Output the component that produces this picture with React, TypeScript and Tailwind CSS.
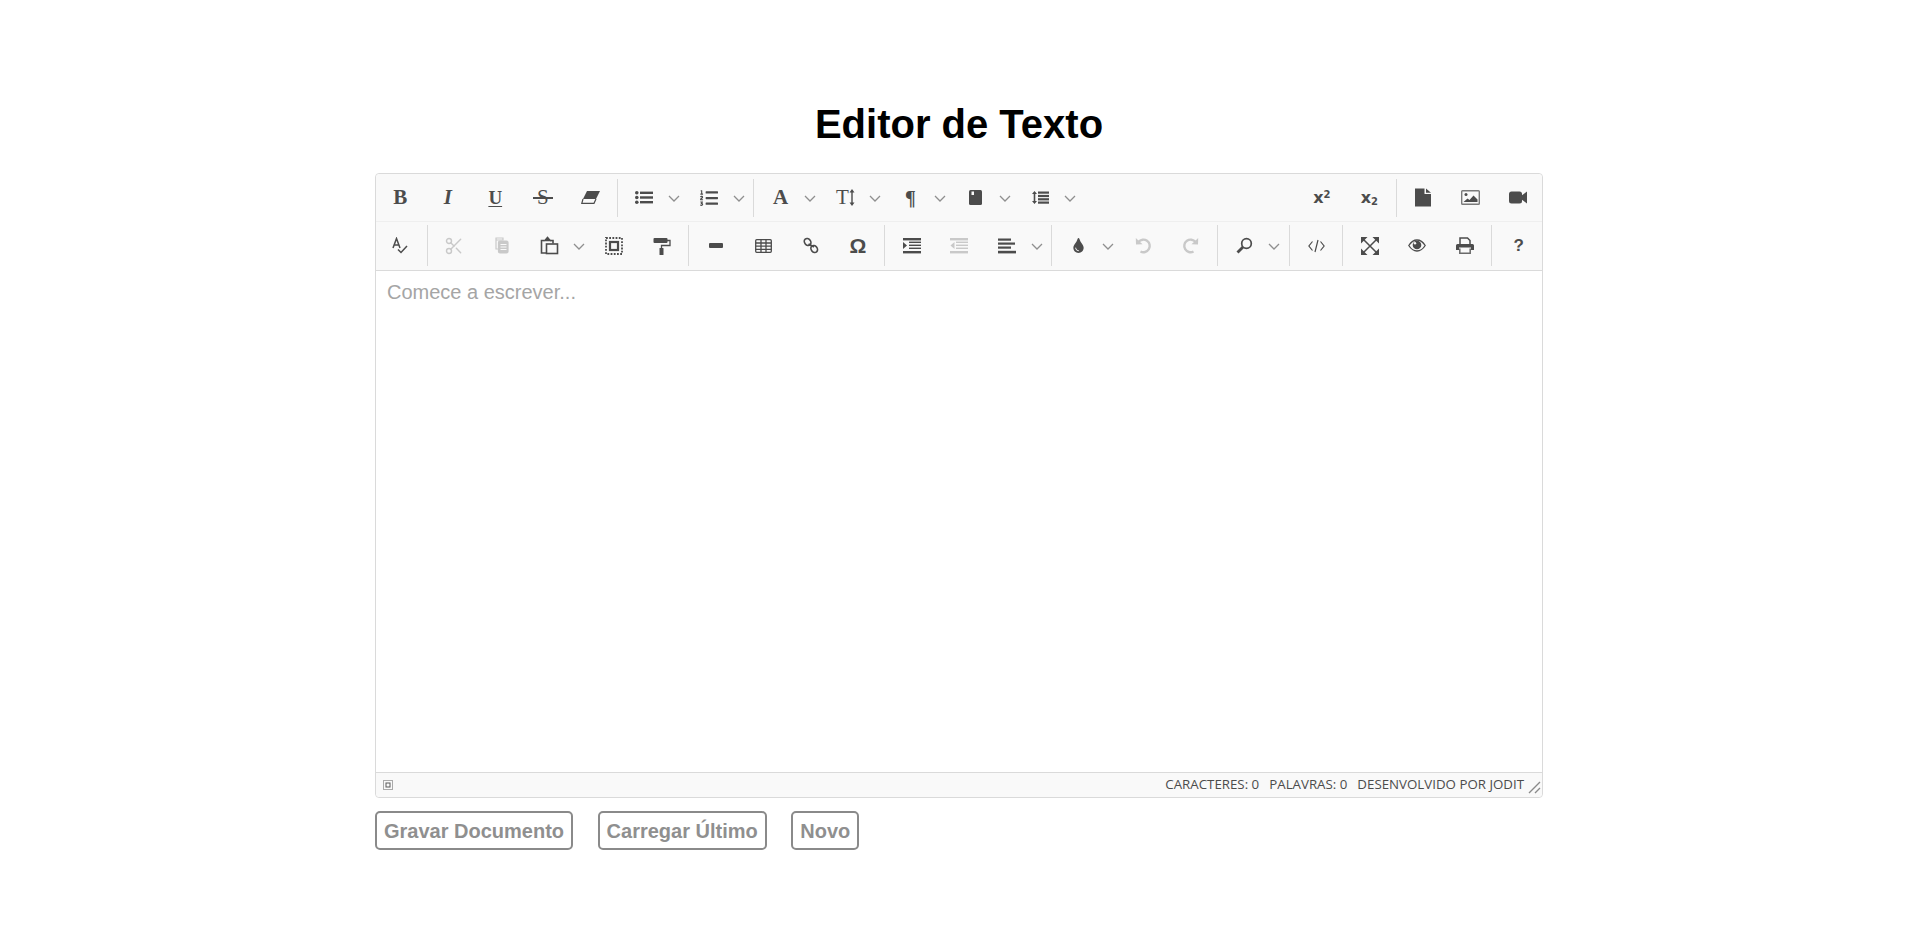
import type { ReactNode } from "react";
import { Scissors } from "lucide-react";
import { FaListOl, FaTint } from "react-icons/fa";

const dark = "#4c4c4c";
const off = "#c9c9c9";

function Btn({ children }: { children: ReactNode }) {
  return <div className="w-[47.5px] h-full flex items-center justify-center shrink-0 text-[#4c4c4c]">{children}</div>;
}

function Chev() {
  return (
    <div className="w-[17.5px] h-full shrink-0 flex items-center">
      <svg width="12" height="7" viewBox="0 0 12 7" fill="none" stroke="#8f8f8f" strokeWidth="1.3" className="mt-[2px]">
        <path d="M1 1l5 5 5-5" />
      </svg>
    </div>
  );
}

function Sep() {
  return <div className="w-px my-[3.5px] mx-[2.7px] bg-[#dadada] shrink-0" />;
}

function Glyph({ children, className }: { children: ReactNode; className: string }) {
  return <span className={`leading-none ${className}`}>{children}</span>;
}

function Eraser() {
  return (
    <svg width="19" height="13" viewBox="0 0 19 13">
      <path d="M2 8L.8 12.300H13L15 8" fill="none" stroke={dark} strokeWidth="1.200" />
      <path d="M6 0h13l-4 8H2z" fill={dark} />
    </svg>
  );
}

function ListUl() {
  return (
    <svg width="18" height="13" viewBox="0 0 18 13" fill={dark}>
      <circle cx="1.800" cy="1.800" r="1.800" />
      <circle cx="1.800" cy="6.500" r="1.800" />
      <circle cx="1.800" cy="11.200" r="1.800" />
      <rect x="5" y="0.600" width="13" height="2.400" />
      <rect x="5" y="5.300" width="13" height="2.400" />
      <rect x="5" y="10" width="13" height="2.400" />
    </svg>
  );
}

function Book() {
  return (
    <svg width="13" height="15" viewBox="0 0 13 15">
      <rect width="13" height="15" rx="1.500" fill={dark} />
      <rect x="2.500" y="1.500" width="2.500" height="3.500" fill="#f9f9f9" />
    </svg>
  );
}

function Spell() {
  return (
    <svg width="16" height="17" viewBox="0 0 16 17" fill="none" stroke={dark} strokeWidth="1.500">
      <path d="M1 11L4.500 1.500 8 11M2.200 8h4.600" />
      <path d="M6 12.500l3 3 6-6.500" />
    </svg>
  );
}

function Copy() {
  return (
    <svg width="14" height="17" viewBox="0 0 14 17" fill="none" stroke={off} strokeWidth="1.200">
      <path d="M1 1h7v2H1zM1 3v9h2" />
      <rect x="3.500" y="4" width="9.500" height="12" rx="1.500" fill={off} />
      <path d="M5.500 7.500h6M5.500 10h6M5.500 12.500h6" stroke="#f9f9f9" strokeWidth="1" />
    </svg>
  );
}

function Paste() {
  return (
    <svg width="19" height="19" viewBox="0 0 19 19" fill="none" stroke={dark} strokeWidth="1.600">
      <path d="M6 17H1.500V4.500h3M10 4.500h3v3" />
      <path d="M5 4.500L7.500 1.500 10 4.500z" fill={dark} />
      <rect x="6.500" y="8" width="11" height="9.500" />
    </svg>
  );
}

function SelectAll() {
  return (
    <svg width="18" height="18" viewBox="0 0 18 18" fill="none" stroke={dark}>
      <rect x="1" y="1" width="16" height="16" strokeWidth="1.800" strokeDasharray="1.800 1.400" />
      <rect x="5" y="5" width="8" height="8" strokeWidth="2.200" />
    </svg>
  );
}

function Roller() {
  return (
    <svg width="18" height="18" viewBox="0 0 18 18">
      <rect x="0.500" y="1" width="14" height="5" rx="1" fill={dark} />
      <path d="M14 3.500h3v5H8.500V12" fill="none" stroke={dark} strokeWidth="1.300" />
      <rect x="6.500" y="11" width="4" height="7" rx="0.600" fill={dark} />
    </svg>
  );
}

function Hr() {
  return <div className="w-[14px] h-[5px] rounded-[1px] bg-[#4c4c4c]" />;
}

function TableIcon() {
  return (
    <svg width="17" height="14" viewBox="0 0 17 14" fill="none" stroke={dark} strokeWidth="1.300">
      <rect x="0.700" y="0.700" width="15.600" height="12.600" rx="1" />
      <path d="M.7 4h15.600M.7 7.200h15.600M.7 10.300h15.600M6 .7v12.600M11 .7v12.600" />
    </svg>
  );
}

function LinkIcon() {
  return (
    <svg width="16" height="17" viewBox="0 0 16 17" fill="none" stroke={dark} strokeWidth="1.700">
      <ellipse cx="4.600" cy="5" rx="3" ry="3.700" transform="rotate(-40 4.600 5)" />
      <ellipse cx="11.200" cy="12" rx="3" ry="3.700" transform="rotate(-40 11.200 12)" />
      <path d="M5.500 7l5.500 3" />
    </svg>
  );
}

function Lines({ color, indent }: { color: string; indent: "in" | "out" }) {
  return (
    <svg width="18" height="16" viewBox="0 0 18 16" fill={color}>
      <rect y="0" width="18" height="2.400" />
      <rect x="6" y="3.600" width="12" height="1.400" />
      <rect x="6" y="6.600" width="12" height="1.400" />
      <rect x="6" y="9.600" width="12" height="1.400" />
      <rect y="13" width="18" height="2.400" />
      {indent === "in" ? <path d="M0 4l4 3.500-4 3.500z" /> : <path d="M4.500 4L.5 7.500l4 3.500z" />}
    </svg>
  );
}

function AlignIcon() {
  return (
    <svg width="18" height="16" viewBox="0 0 18 16" fill={dark}>
      <rect y="0.500" width="13" height="2.200" />
      <rect y="4.500" width="17" height="2.200" />
      <rect y="8.500" width="13" height="2.200" />
      <rect y="12.800" width="18" height="2.600" />
    </svg>
  );
}

function LineHeight() {
  return (
    <svg width="17" height="13" viewBox="0 0 17 13" fill={dark}>
      <path d="M2.500 0L5 3H3.300v7H5l-2.500 3L0 10h1.700V3H0z" />
      <rect x="6" y="0.500" width="11" height="2.200" />
      <rect x="6" y="3.900" width="11" height="2.200" />
      <rect x="6" y="7.200" width="11" height="2.200" />
      <rect x="6" y="10.500" width="11" height="2.200" />
    </svg>
  );
}

function Arc({ flip }: { flip?: boolean }) {
  return (
    <svg width="17" height="17" viewBox="0 0 17 17" fill="none" className={flip ? "-scale-x-100" : ""}>
      <path d="M3.500 5A6.300 6.300 0 1 1 5.500 14.500" stroke={off} strokeWidth="2.400" />
      <path d="M.8 1l.2 6.500 6.500-.2z" fill={off} />
    </svg>
  );
}

function Search() {
  return (
    <svg width="17" height="17" viewBox="0 0 17 17" fill="none" stroke={dark}>
      <circle cx="10.500" cy="6.500" r="4.800" strokeWidth="1.700" />
      <path d="M7 10L1.500 15.500" strokeWidth="2.800" />
    </svg>
  );
}

function CodeIcon() {
  return (
    <svg width="17" height="14" viewBox="0 0 17 14" fill="none" stroke={dark} strokeWidth="1.200">
      <path d="M4.500 2.500L.9 7l3.600 4.500M12.500 2.500L16.100 7l-3.600 4.500M10 1L7 13" />
    </svg>
  );
}

function Fullscreen() {
  return (
    <svg width="18" height="18" viewBox="0 0 18 18" fill={dark}>
      <path d="M0 0h6.500L0 6.500zM18 0v6.500L11.500 0zM0 18v-6.500L6.500 18zM18 18h-6.500l6.500-6.500z" />
      <path d="M2.500 2.500l13 13M15.500 2.500l-13 13" stroke={dark} strokeWidth="1.500" fill="none" />
    </svg>
  );
}

function Eye() {
  return (
    <svg width="18" height="13" viewBox="0 0 18 13">
      <path d="M.8 6.500C3 3 5.800 1 9 1s6 2 8.200 5.500C15 10 12.200 12 9 12S3 10 .8 6.500z" fill="none" stroke={dark} strokeWidth="1.300" />
      <circle cx="9" cy="6" r="4.300" fill={dark} />
      <circle cx="7" cy="4.300" r="1.200" fill="#f9f9f9" />
    </svg>
  );
}

function Printer() {
  return (
    <svg width="18" height="17" viewBox="0 0 18 17">
      <path d="M4 7V1h7.500L14 3.500V7" fill="none" stroke={dark} strokeWidth="1.500" />
      <path d="M1.500 7h15A1.500 1.500 0 0 1 18 8.500V13h-3v-2.500H3V13H0V8.500A1.500 1.500 0 0 1 1.500 7z" fill={dark} />
      <path d="M3.800 11.500v4.700h10.400v-4.700" fill="none" stroke="#6a6a6a" strokeWidth="1.500" />
    </svg>
  );
}

function FileIcon() {
  return (
    <svg width="16" height="19" viewBox="0 0 16 19" fill={dark}>
      <path d="M0 .5h9.500v5.500H16v12.500H0zM11 .5L16 4.700h-5z" />
    </svg>
  );
}

function ImageIcon() {
  return (
    <svg width="19" height="15" viewBox="0 0 19 15">
      <rect x="0.700" y="0.700" width="17.600" height="13.600" rx="0.800" fill="none" stroke="#7a7a7a" strokeWidth="1.400" />
      <circle cx="5" cy="4.500" r="1.500" fill={dark} />
      <path d="M2.500 12l4-3.500 2 1.500 4-4.500 4 4v2.500z" fill={dark} />
    </svg>
  );
}

function VideoIcon() {
  return (
    <svg width="18" height="13" viewBox="0 0 18 13" fill={dark}>
      <rect x="0" y="0.500" width="13" height="12" rx="2.500" />
      <path d="M12 5l6-4.500v12L12 8z" />
    </svg>
  );
}

function Toolbar() {
  return (
    <div className="bg-[#f9f9f9] border-b border-[#dadada] rounded-t-[4px]">
      <div className="flex h-[47.5px] pl-[0.5px] pt-[1px] border-b border-[#efefef]">
        <Btn><Glyph className="font-['Liberation_Serif'] font-bold text-[21px]">B</Glyph></Btn>
        <Btn><Glyph className="font-['Liberation_Serif'] font-bold italic text-[21px]">I</Glyph></Btn>
        <Btn><Glyph className="font-['Liberation_Serif'] font-bold underline underline-offset-2 text-[19px]">U</Glyph></Btn>
        <Btn>
          <span className="relative font-['Liberation_Serif'] text-[21px] leading-none">
            S
            <span className="absolute left-[-4px] right-[-4px] top-[10px] h-[1.500px] bg-[#4c4c4c]" />
          </span>
        </Btn>
        <Btn><Eraser /></Btn>
        <Sep />
        <Btn><ListUl /></Btn><Chev />
        <Btn><FaListOl size={18} /></Btn><Chev />
        <Sep />
        <Btn><Glyph className="font-['Liberation_Serif'] font-bold text-[21px]">A</Glyph></Btn><Chev />
        <Btn>
          <div className="flex items-center">
            <Glyph className="font-['Liberation_Serif'] text-[21px]">T</Glyph>
            <svg width="6" height="17" viewBox="0 0 6 17" fill={dark}>
              <path d="M3 0l2.500 3.500H3.700v10h1.800L3 17 .5 13.500h1.800v-10H.5z" />
            </svg>
          </div>
        </Btn><Chev />
        <Btn><Glyph className="font-['Liberation_Serif'] font-bold text-[20px]">¶</Glyph></Btn><Chev />
        <Btn><Book /></Btn><Chev />
        <Btn><LineHeight /></Btn><Chev />
        <div className="ml-auto flex h-full">
          <Btn><span className="font-['DejaVu_Sans'] font-bold text-[16px] leading-none">x<sup className="text-[10px] font-bold">2</sup></span></Btn>
          <Btn><span className="font-['DejaVu_Sans'] font-bold text-[16px] leading-none">x<sub className="text-[10px] font-bold">2</sub></span></Btn>
          <Sep />
          <Btn><FileIcon /></Btn>
          <Btn><ImageIcon /></Btn>
          <Btn><VideoIcon /></Btn>
        </div>
      </div>
      <div className="flex h-[48px] pl-[0.5px]">
        <Btn><Spell /></Btn>
        <Sep />
        <Btn><Scissors size={20} color={off} strokeWidth={1.700} /></Btn>
        <Btn><Copy /></Btn>
        <Btn><Paste /></Btn><Chev />
        <Btn><SelectAll /></Btn>
        <Btn><Roller /></Btn>
        <Sep />
        <Btn><Hr /></Btn>
        <Btn><TableIcon /></Btn>
        <Btn><LinkIcon /></Btn>
        <Btn><Glyph className="font-['Liberation_Sans'] font-bold text-[21px]">Ω</Glyph></Btn>
        <Sep />
        <Btn><Lines color={dark} indent="in" /></Btn>
        <Btn><Lines color={off} indent="out" /></Btn>
        <Btn><AlignIcon /></Btn><Chev />
        <Sep />
        <Btn><FaTint size={15} /></Btn><Chev />
        <Btn><Arc /></Btn>
        <Btn><Arc flip /></Btn>
        <Sep />
        <Btn><Search /></Btn><Chev />
        <Sep />
        <Btn><CodeIcon /></Btn>
        <Sep />
        <Btn><Fullscreen /></Btn>
        <Btn><Eye /></Btn>
        <Btn><Printer /></Btn>
        <Sep />
        <Btn><Glyph className="font-['Liberation_Sans'] font-bold text-[17px]">?</Glyph></Btn>
      </div>
    </div>
  );
}

function StatusBar() {
  return (
    <div className="flex items-center h-[25px] bg-[#f9f9f9] border-t border-[#dadada] rounded-b-[4px] pl-[7px] pr-[1px] text-[#4c4c4c]">
      <svg width="10" height="10" viewBox="0 0 10 10" fill="none" stroke="#5a5a5a">
        <rect x="0.500" y="0.500" width="9" height="9" strokeWidth="1" strokeDasharray="1 1" />
        <rect x="3" y="3" width="4" height="4" strokeWidth="1" />
      </svg>
      <div className="ml-auto flex items-center font-['Open_Sans'] text-[13.3px] leading-none gap-[10px] mr-[4px] pt-[1px]">
        <span>CARACTERES: 0</span>
        <span>PALAVRAS: 0</span>
        <span>DESENVOLVIDO POR JODIT</span>
      </div>
      <svg width="13" height="13" viewBox="0 0 13 13" fill="none" stroke="#8a8a8a" strokeWidth="1.400" className="mt-[5px]">
        <path d="M1 12L12 1M7 12l5-5" />
      </svg>
    </div>
  );
}

function FormBtn({ children }: { children: ReactNode }) {
  return (
    <button className="h-[39px] px-[7px] border-2 border-[#8a8a8a] rounded-[5px] bg-white font-['Liberation_Sans'] font-bold text-[20px] text-[#8f8f8f]">
      {children}
    </button>
  );
}

export default function App() {
  return (
    <div className="min-h-[927px] bg-white pt-[101px] font-['Liberation_Sans',sans-serif]">
      <div className="w-[1168px] mx-auto">
        <h1 className="text-[40px] font-bold text-black text-center leading-[46px] mb-[26px]">Editor de Texto</h1>
        <div className="border border-[#dadada] rounded-[4px]">
          <Toolbar />
          <div className="h-[501px] bg-white pl-[11px] pt-[10px] text-[20px] leading-[23px] text-[#a5a5a5]">Comece a escrever...</div>
          <StatusBar />
        </div>
        <div className="flex gap-[24.500px] mt-[13.500px]">
          <FormBtn>Gravar Documento</FormBtn>
          <FormBtn>Carregar Último</FormBtn>
          <FormBtn>Novo</FormBtn>
        </div>
      </div>
    </div>
  );
}
